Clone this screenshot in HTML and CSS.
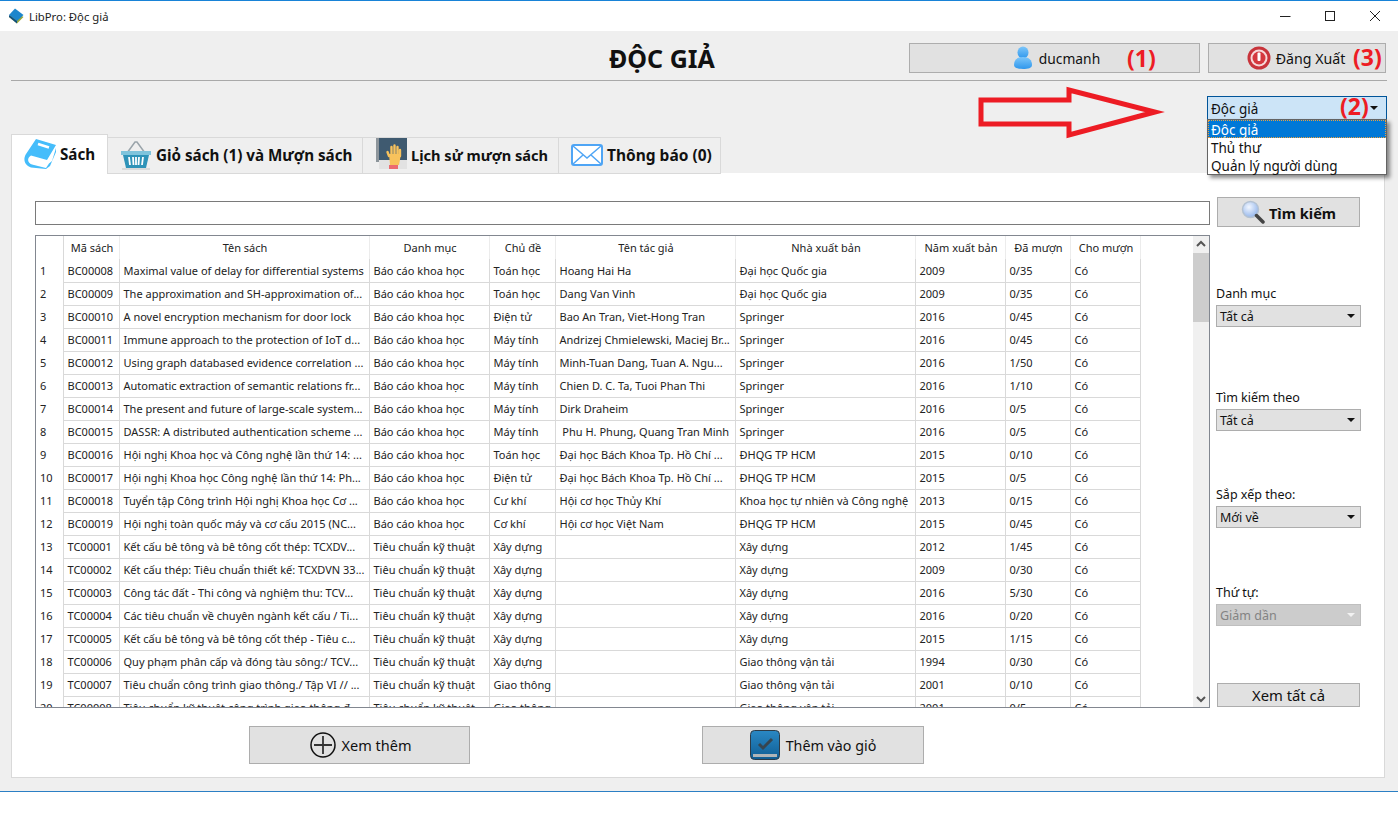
FILE: index.html
```html
<!DOCTYPE html>
<html lang="vi">
<head>
<meta charset="utf-8">
<title>LibPro: Độc giả</title>
<link rel="stylesheet" href="styles.css">
</head>
<body>
<div class="window">
  <header class="titlebar">
    <svg class="app-icon" viewBox="0 0 16 16" width="16" height="16"><path d="M1 9 9 15.500 15.500 9 7 4Z" fill="#9aa83c"/><path d="M1 7 9 13 15.500 7 7 .5Z" fill="#1c86cc"/><path d="M1 7 9 13v2.500L1 9Z" fill="#0d4d80"/></svg>
    <span class="app-title">LibPro: Độc giả</span>
    <div class="win-controls">
      <svg width="12" height="12" viewBox="0 0 12 12"><path d="M1 6.500h10.500" stroke="#222" fill="none"/></svg>
      <svg width="12" height="12" viewBox="0 0 12 12"><rect x="1.500" y="1.500" width="9" height="9" stroke="#222" fill="none"/></svg>
      <svg width="12" height="12" viewBox="0 0 12 12"><path d="M1 1 11 11M11 1 1 11" stroke="#222" fill="none"/></svg>
    </div>
  </header>

  <main class="client">
    <div class="head-row">
      <h1 class="page-title">ĐỘC GIẢ</h1>
      <button class="btn btn-user">
        <svg width="20" height="24" viewBox="0 0 20 24"><defs><linearGradient id="u" x1="0" y1="0" x2="0" y2="1"><stop offset="0" stop-color="#7cc6fa"/><stop offset="1" stop-color="#2f97ec"/></linearGradient></defs><ellipse cx="10" cy="6.500" rx="5.500" ry="6" fill="url(#u)"/><path d="M1 19c0-5 3-8 9-8s9 3 9 8c0 3-4 4-9 4s-9-1-9-4Z" fill="url(#u)"/></svg>
        <span>ducmanh</span>
      </button>
      <button class="btn btn-logout">
        <svg width="24" height="24" viewBox="0 0 24 24"><circle cx="12" cy="12" r="11.500" fill="#c8343b"/><circle cx="12" cy="12" r="8.500" fill="#f6d9d9"/><circle cx="12" cy="12" r="6.500" fill="#d5383e"/><rect x="10.500" y="6.500" width="3" height="8.500" rx="1" fill="#fff"/></svg>
        <span>Đăng Xuất</span>
      </button>
    </div>

    <div class="role-row">
      <div class="role-combo">
        <div class="role-value"><span>Độc giả</span><i class="caret"></i></div>
        <ul class="role-list">
          <li class="selected">Độc giả</li>
          <li>Thủ thư</li>
          <li>Quản lý người dùng</li>
        </ul>
      </div>
    </div>

    <nav class="tabs">
      <div class="tab tab-active tab-1">
        <svg width="32" height="30" viewBox="0 0 32 30"><path d="M12 0 32 6 23 21 7 16.500C3 19 3 24 8 25.500L22 29 25 24.500 28 22 32 9V13L26 27 22 30 7 28.500C0 26-1 20 2 15Z" fill="#45bdfb"/><path d="M14 5 25 8.500" stroke="#fff" stroke-width="2.500"/></svg>
        <span>Sách</span>
      </div>
      <div class="tab tab-2">
        <svg width="32" height="30" viewBox="0 0 32 30"><path d="M7 13 15 2h2l8 11" fill="none" stroke="#9aa4aa" stroke-width="1.500"/><path d="M1 11h30v4H1Z" fill="#7fc4dc"/><path d="M3 15h26l-3 13H6Z" fill="#2f93b8"/><path d="M9 17l1 8M13 17l.5 8M16 17v8M19 17l-.5 8M23 17l-1 8" stroke="#fff" stroke-width="1.800"/><path d="M2 29h28" stroke="#c5c5c5"/></svg>
        <span>Giỏ sách (1) và Mượn sách</span>
      </div>
      <div class="tab tab-3">
        <svg width="32" height="34" viewBox="0 0 32 34"><path d="M4 22h28v9H4Z" fill="#e2e2e2"/><rect x="1" y="0" width="3" height="24" fill="#8d959b"/><rect x="4" y="0" width="28" height="22" fill="#3f5a70"/><path d="M14 18 12.500 14M16.500 17V9M19.500 17V7.500M22.500 17V9M25 18V12" stroke="#f8c25c" stroke-width="2.400" stroke-linecap="round" fill="none"/><path d="M14 16H26L24 27H15Z" fill="#f8c25c"/><rect x="14" y="27" width="9" height="4" fill="#ec6a6f"/></svg>
        <span>Lịch sử mượn sách</span>
      </div>
      <div class="tab tab-4">
        <svg width="32" height="22" viewBox="0 0 32 22"><rect x="1" y="1" width="30" height="20" rx="2" fill="#fff" stroke="#4fa5f5" stroke-width="2"/><path d="M2 2 16 14 30 2M2 20 12 11M30 20 20 11" fill="none" stroke="#4fa5f5" stroke-width="1.500"/></svg>
        <span>Thông báo (0)</span>
      </div>
    </nav>

    <section class="pane">
      <div class="pane-main">
        <input class="search-input" type="text" aria-label="Tìm kiếm">
        <div class="table-box">
          <div class="table-view">
            <table class="books">
              <colgroup>
                <col class="c-n"><col class="c-id"><col class="c-title"><col class="c-cat"><col class="c-sub"><col class="c-auth"><col class="c-pub"><col class="c-year"><col class="c-bor"><col class="c-lend">
              </colgroup>
              <thead>
                <tr><th></th><th>Mã sách</th><th>Tên sách</th><th>Danh mục</th><th>Chủ đề</th><th>Tên tác giả</th><th>Nhà xuất bản</th><th>Năm xuất bản</th><th>Đã mượn</th><th>Cho mượn</th></tr>
              </thead>
              <tbody>
                <tr><td>1</td><td>BC00008</td><td>Maximal value of delay for differential systems</td><td>Báo cáo khoa học</td><td>Toán học</td><td>Hoang Hai Ha</td><td>Đại học Quốc gia</td><td>2009</td><td>0/35</td><td>Có</td></tr>
                <tr><td>2</td><td>BC00009</td><td>The approximation and SH-approximation of...</td><td>Báo cáo khoa học</td><td>Toán học</td><td>Dang Van Vinh</td><td>Đại học Quốc gia</td><td>2009</td><td>0/35</td><td>Có</td></tr>
                <tr><td>3</td><td>BC00010</td><td>A novel encryption mechanism for door lock</td><td>Báo cáo khoa học</td><td>Điện tử</td><td>Bao An Tran, Viet-Hong Tran</td><td>Springer</td><td>2016</td><td>0/45</td><td>Có</td></tr>
                <tr><td>4</td><td>BC00011</td><td>Immune approach to the protection of IoT d...</td><td>Báo cáo khoa học</td><td>Máy tính</td><td>Andrizej Chmielewski, Maciej Br...</td><td>Springer</td><td>2016</td><td>0/45</td><td>Có</td></tr>
                <tr><td>5</td><td>BC00012</td><td>Using graph databased evidence correlation ...</td><td>Báo cáo khoa học</td><td>Máy tính</td><td>Minh-Tuan Dang, Tuan A. Ngu...</td><td>Springer</td><td>2016</td><td>1/50</td><td>Có</td></tr>
                <tr><td>6</td><td>BC00013</td><td>Automatic extraction of semantic relations fr...</td><td>Báo cáo khoa học</td><td>Máy tính</td><td>Chien D. C. Ta, Tuoi Phan Thi</td><td>Springer</td><td>2016</td><td>1/10</td><td>Có</td></tr>
                <tr><td>7</td><td>BC00014</td><td>The present and future of large-scale system...</td><td>Báo cáo khoa học</td><td>Máy tính</td><td>Dirk Draheim</td><td>Springer</td><td>2016</td><td>0/5</td><td>Có</td></tr>
                <tr><td>8</td><td>BC00015</td><td>DASSR: A distributed authentication scheme ...</td><td>Báo cáo khoa học</td><td>Máy tính</td><td>&nbsp;Phu H. Phung, Quang Tran Minh</td><td>Springer</td><td>2016</td><td>0/5</td><td>Có</td></tr>
                <tr><td>9</td><td>BC00016</td><td>Hội nghị Khoa học và Công nghệ lần thứ 14: ...</td><td>Báo cáo khoa học</td><td>Toán học</td><td>Đại học Bách Khoa Tp. Hồ Chí ...</td><td>ĐHQG TP HCM</td><td>2015</td><td>0/10</td><td>Có</td></tr>
                <tr><td>10</td><td>BC00017</td><td>Hội nghị Khoa học Công nghệ lần thứ 14: Ph...</td><td>Báo cáo khoa học</td><td>Điện tử</td><td>Đại học Bách Khoa Tp. Hồ Chí ...</td><td>ĐHQG TP HCM</td><td>2015</td><td>0/5</td><td>Có</td></tr>
                <tr><td>11</td><td>BC00018</td><td>Tuyển tập Công trình Hội nghị Khoa học Cơ ...</td><td>Báo cáo khoa học</td><td>Cư khí</td><td>Hội cơ học Thủy Khí</td><td>Khoa học tự nhiên và Công nghệ</td><td>2013</td><td>0/15</td><td>Có</td></tr>
                <tr><td>12</td><td>BC00019</td><td>Hội nghị toàn quốc máy và cơ cấu 2015 (NC...</td><td>Báo cáo khoa học</td><td>Cơ khí</td><td>Hội cơ học Việt Nam</td><td>ĐHQG TP HCM</td><td>2015</td><td>0/45</td><td>Có</td></tr>
                <tr><td>13</td><td>TC00001</td><td>Kết cấu bê tông và bê tông cốt thép: TCXDV...</td><td>Tiêu chuẩn kỹ thuật</td><td>Xây dựng</td><td></td><td>Xây dựng</td><td>2012</td><td>1/45</td><td>Có</td></tr>
                <tr><td>14</td><td>TC00002</td><td>Kết cấu thép: Tiêu chuẩn thiết kế: TCXDVN 33...</td><td>Tiêu chuẩn kỹ thuật</td><td>Xây dựng</td><td></td><td>Xây dựng</td><td>2009</td><td>0/30</td><td>Có</td></tr>
                <tr><td>15</td><td>TC00003</td><td>Công tác đất - Thi công và nghiệm thu: TCV...</td><td>Tiêu chuẩn kỹ thuật</td><td>Xây dựng</td><td></td><td>Xây dựng</td><td>2016</td><td>5/30</td><td>Có</td></tr>
                <tr><td>16</td><td>TC00004</td><td>Các tiêu chuẩn về chuyên ngành kết cấu / Ti...</td><td>Tiêu chuẩn kỹ thuật</td><td>Xây dựng</td><td></td><td>Xây dựng</td><td>2016</td><td>0/20</td><td>Có</td></tr>
                <tr><td>17</td><td>TC00005</td><td>Kết cấu bê tông và bê tông cốt thép - Tiêu c...</td><td>Tiêu chuẩn kỹ thuật</td><td>Xây dựng</td><td></td><td>Xây dựng</td><td>2015</td><td>1/15</td><td>Có</td></tr>
                <tr><td>18</td><td>TC00006</td><td>Quy phạm phân cấp và đóng tàu sông:/ TCV...</td><td>Tiêu chuẩn kỹ thuật</td><td>Xây dựng</td><td></td><td>Giao thông vận tải</td><td>1994</td><td>0/30</td><td>Có</td></tr>
                <tr><td>19</td><td>TC00007</td><td>Tiêu chuẩn công trình giao thông./ Tập VI // ...</td><td>Tiêu chuẩn kỹ thuật</td><td>Giao thông</td><td></td><td>Giao thông vận tải</td><td>2001</td><td>0/10</td><td>Có</td></tr>
                <tr><td>20</td><td>TC00008</td><td>Tiêu chuẩn kỹ thuật công trình giao thông đ...</td><td>Tiêu chuẩn kỹ thuật</td><td>Giao thông</td><td></td><td>Giao thông vận tải</td><td>2001</td><td>0/5</td><td>Có</td></tr>
              </tbody>
            </table>
          </div>
          <div class="scrollbar">
            <svg width="16" height="16" viewBox="0 0 16 16"><path d="M4 10 8 6 12 10" fill="none" stroke="#555" stroke-width="2"/></svg>
            <div class="thumb"></div>
            <div class="track"></div>
            <svg width="16" height="16" viewBox="0 0 16 16"><path d="M4 6 8 10 12 6" fill="none" stroke="#555" stroke-width="2"/></svg>
          </div>
        </div>
        <div class="actions">
          <button class="btn btn-more">
            <svg width="26" height="26" viewBox="0 0 26 26"><circle cx="13" cy="13" r="12" fill="none" stroke="#111" stroke-width="1.500"/><path d="M13 4V22M4 13H22" stroke="#333" stroke-width="1.800"/></svg>
            <span>Xem thêm</span>
          </button>
          <button class="btn btn-add">
            <svg width="30" height="30" viewBox="0 0 30 30"><defs><linearGradient id="b" x1="0" y1="0" x2="0" y2="1"><stop offset="0" stop-color="#2a88c4"/><stop offset="1" stop-color="#0f5d94"/></linearGradient></defs><rect x="0.500" y="0.500" width="29" height="29" rx="4" fill="url(#b)" stroke="#2d3b47"/><path d="M9 14l4 4 9-9" fill="none" stroke="#37454f" stroke-width="3"/><rect x="3" y="24" width="24" height="3" fill="#b0b5b8"/></svg>
            <span>Thêm vào giỏ</span>
          </button>
        </div>
      </div>

      <aside class="side">
        <button class="btn btn-search">
          <svg width="24" height="24" viewBox="0 0 24 24"><defs><radialGradient id="g" cx=".4" cy=".35" r=".7"><stop offset="0" stop-color="#f2f7ff"/><stop offset="1" stop-color="#8fb2ea"/></radialGradient></defs><circle cx="9.500" cy="9.500" r="8" fill="url(#g)" stroke="#b4c2d2" stroke-width="1.500"/><path d="M15.500 15.500 22 22" stroke="#444" stroke-width="3.500" stroke-linecap="round"/></svg>
          <span>Tìm kiếm</span>
        </button>
        <div class="field field-1"><label>Danh mục</label><div class="combo"><span>Tất cả</span><i class="caret"></i></div></div>
        <div class="field field-2"><label>Tìm kiếm theo</label><div class="combo"><span>Tất cả</span><i class="caret"></i></div></div>
        <div class="field field-3"><label>Sắp xếp theo:</label><div class="combo"><span>Mới về</span><i class="caret"></i></div></div>
        <div class="field field-4"><label>Thứ tự:</label><div class="combo combo-off"><span>Giảm dần</span><i class="caret"></i></div></div>
        <button class="btn btn-all">Xem tất cả</button>
      </aside>
    </section>

    <svg class="arrow" width="190" height="60" viewBox="0 0 190 60"><path d="M4 14H92V4L178 26 92 49V38H4Z" fill="none" stroke="#ed1c24" stroke-width="5"/></svg>
    <b class="note note-1">(1)</b>
    <b class="note note-2">(2)</b>
    <b class="note note-3">(3)</b>
  </main>
</div>
</body>
</html>
```
FILE: styles.css
```css
* { box-sizing: border-box; }
html, body { margin: 0; padding: 0; height: 100%; background: #fff; overflow: hidden; }
body { font-family: "Noto Sans", "Open Sans", sans-serif; color: #111; }
.window { width: 1398px; height: 831px; display: flex; flex-direction: column; }

.titlebar { height: 31px; flex: none; background: #fff; border-top: 1px solid #1883d7; display: flex; align-items: center; padding-left: 8px; }
.app-icon { margin-right: 5px; }
.app-title { font-size: 11.300px; color: #222; }
.win-controls { margin-left: auto; display: flex; gap: 33px; padding-right: 17px; }

.client { position: relative; height: 761px; flex: none; background: #efefef; border-bottom: 1px solid #2b7fc4; padding: 0 11px; }
.head-row { height: 50px; display: flex; align-items: flex-start; padding-top: 12px; border-bottom: 1px solid #a9a9a9; }
.page-title { width: 898px; margin: 0; padding-left: 598px; font-size: 25px; line-height: 31px; font-weight: 700; color: #111; white-space: nowrap; }

.btn { display: flex; align-items: center; justify-content: center; background: #e1e1e1; border: 1px solid #adadad; font: inherit; color: #111; padding: 0; }
.btn-user { width: 291px; height: 30px; font-size: 13.800px; gap: 6px; padding-left: 4px; }
.btn-logout { width: 178px; height: 30px; margin-left: 8px; font-size: 14.200px; gap: 5px; padding-right: 2px; }

.role-row { height: 53px; padding-top: 15px; display: flex; justify-content: flex-end; }
.role-combo { position: relative; width: 180px; height: 24px; font-size: 13.500px; }
.role-value { height: 24px; background: #cce4f7; border: 1px solid #005499; display: flex; align-items: center; justify-content: space-between; padding: 2px 8px 0 3px; }
.role-value .caret { margin-top: -2px; }
.role-list { position: absolute; z-index: 3; left: 0; top: 23px; width: 180px; height: 56px; margin: 0; padding: 0; list-style: none; background: #fff; border: 1px solid #646464; box-shadow: 3px 3px 4px rgba(0,0,0,.45); }
.role-list li { height: 18px; line-height: 20px; padding-left: 3px; }
.role-list .selected { background: #0078d7; color: #fff; outline: 1px dotted #e8a040; outline-offset: -1px; }

.caret { width: 0; height: 0; border-left: 4px solid transparent; border-right: 4px solid transparent; border-top: 4px solid #111; flex: none; }

.tabs { display: flex; align-items: flex-end; height: 40px; position: relative; z-index: 1; margin-bottom: -1px; }
.tab { display: flex; align-items: center; gap: 4px; height: 37px; padding: 0 0 1px 12px; background: #efefef; border: 1px solid #d9d9d9; border-left: 0; font-size: 15.200px; font-weight: 700; white-space: nowrap; }
.tab-active { height: 40px; background: #fff; border-left: 1px solid #d9d9d9; border-bottom: 0; padding-bottom: 2px; }
.tab-1 { width: 97px; }
.tab-2 { width: 255px; }
.tab-3 { width: 196px; font-size: 14.600px; }
.tab-4 { width: 162px; font-size: 15.500px; }

.pane { width: 1374px; height: 605px; background: #fff; border: 1px solid #d9d9d9; border-top: 0; padding-left: 23px; display: flex; }
.pane-main { width: 1175px; padding-top: 28px; flex: none; }
.search-input { display: block; width: 100%; height: 24px; border: 1px solid #7a7a7a; background: #fff; margin: 0 0 10px; padding: 0; }

.table-box { height: 473px; border: 1px solid #828790; display: flex; background: #fff; }
.table-view { width: 1157px; overflow: hidden; }
.books { table-layout: fixed; width: 1104px; border-collapse: collapse; font-size: 11px; color: #222; }
.c-n { width: 27px; } .c-id { width: 56px; } .c-title { width: 250px; } .c-cat { width: 120px; } .c-sub { width: 66px; }
.c-auth { width: 180px; } .c-pub { width: 180px; } .c-year { width: 90px; } .c-bor { width: 65px; } .c-lend { width: 70px; }
.books th { height: 23px; font-weight: 400; border-right: 1px solid #ececec; padding: 0 0 0 2px; text-align: center; white-space: nowrap; overflow: hidden; }
.books th:first-child { border-right-color: #d9d9d9; }
.books td { height: 23px; padding: 0 0 0 4px; border-right: 1px solid #d9d9d9; border-bottom: 1px solid #d9d9d9; white-space: nowrap; overflow: hidden; }
.books td:first-child { border-bottom: 0; padding-left: 4px; }

.scrollbar { width: 16px; background: #f0f0f0; display: flex; flex-direction: column; }
.thumb { height: 69px; margin-top: 1px; background: #cdcdcd; }
.track { flex: 1; }

.actions { display: flex; padding: 18px 0 0 214px; gap: 232px; }
.btn-more, .btn-add { height: 38px; gap: 6px; }
.btn-more { width: 221px; font-size: 14.500px; padding-left: 2px; }
.btn-add { width: 222px; font-size: 14.300px; }

.side { width: 145px; margin-left: 6px; padding-top: 24px; flex: none; }
.btn-search { width: 143px; height: 30px; margin-left: 1px; gap: 4px; font-size: 14.600px; font-weight: 700; }
.btn-search span { margin-top: 1px; }
.field label { display: block; height: 20px; font-size: 12.500px; line-height: 18px; }
.field-1 { margin-top: 58px; }
.field-2 { margin-top: 62px; }
.field-3 { margin-top: 55px; }
.field-4 { margin-top: 56px; }
.combo { width: 145px; height: 22px; background: #e1e1e1; border: 1px solid #adadad; display: flex; align-items: center; justify-content: space-between; padding: 0 5px 0 3px; font-size: 12.500px; }
.combo-off { background: #ccc; color: #838383; border-color: #bfbfbf; }
.combo-off .caret { border-top-color: #f2f2f2; }
.btn-all { width: 143px; height: 24px; margin: 57px 0 0 1px; font-size: 14.800px; }

.arrow { position: absolute; left: 977px; top: 55px; z-index: 2; }
.note { position: absolute; z-index: 4; color: #ed1c24; font-size: 23px; line-height: 30px; font-family: "Noto Sans", sans-serif; }
.note-1 { left: 1127px; top: 12px; }
.note-2 { left: 1340px; top: 60px; }
.note-3 { left: 1353px; top: 11px; }
```
